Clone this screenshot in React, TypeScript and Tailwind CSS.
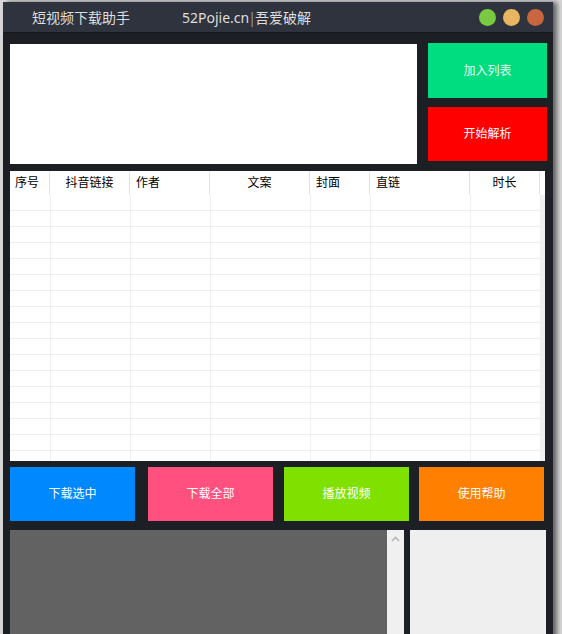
import React from "react";

const cols = [
  { name: "序号", w: "w-[40px]", align: "justify-start pl-[5px]" },
  { name: "抖音链接", w: "w-[80px]", align: "justify-center" },
  { name: "作者", w: "w-[80px]", align: "justify-start pl-[6px]" },
  { name: "文案", w: "w-[100px]", align: "justify-center" },
  { name: "封面", w: "w-[60px]", align: "justify-start pl-[6px]" },
  { name: "直链", w: "w-[100px]", align: "justify-start pl-[6px]" },
  { name: "时长", w: "w-[70px]", align: "justify-center" },
];

const rows = Array.from({ length: 17 }, (_, i) => i);

const actions = [
  { label: "下载选中", cls: "bg-[#0088ff]" },
  { label: "下载全部", cls: "bg-[#ff5080] ml-[13px]" },
  { label: "播放视频", cls: "bg-[#80e000] ml-[11px]" },
  { label: "使用帮助", cls: "bg-[#ff8000] ml-[10px]" },
];

export default function App() {
  return (
    <div
      className="w-[562px] h-[634px] overflow-hidden bg-[#d8d8d8] pt-[2px] pl-[3px] text-[12px]"
      style={{ fontFamily: '"Noto Sans", "Noto Sans CJK SC", sans-serif' }}
    >
      <div className="w-[550px] h-[640px] bg-[#1c1f23] flex flex-col shadow-[4px_0_5px_rgba(0,0,0,0.55)]">
        {/* title bar */}
        <div className="h-[31px] bg-[#2f333d] flex items-center text-[#dedede] text-[14px] border-b border-[#15171a]">
          <span className="ml-[29px]">短视频下载助手</span>
          <span className="ml-[52px]">
            52Pojie.cn<span className="text-[#9a9a9a] -mx-[1px]">|</span>吾爱破解
          </span>
          <div className="ml-auto mr-[9px] flex items-center gap-[7px]">
            <span className="w-[17px] h-[17px] rounded-full bg-[#7ac943]" />
            <span className="w-[17px] h-[17px] rounded-full bg-[#e8b660]" />
            <span className="w-[17px] h-[17px] rounded-full bg-[#c8663f]" />
          </div>
        </div>

        <div className="pl-[7px] pr-[6px] pt-[10px] flex flex-col">
          {/* input + top buttons */}
          <div className="flex gap-[11px]">
            <div className="w-[407px] h-[120px] mt-[1px] bg-white" />
            <div className="flex flex-col gap-[9px]">
              <button className="w-[119px] h-[55px] bg-[#00dc80] text-[#e8f8ef]">加入列表</button>
              <button className="w-[119px] h-[54px] bg-[#ff0000] text-white">开始解析</button>
            </div>
          </div>

          {/* table */}
          <div className="mt-[7px] w-[535px] h-[290px] bg-white flex overflow-hidden">
            <div className="w-[531px] flex flex-col">
              <div className="h-[24px] flex shrink-0 text-black">
                {cols.map((c) => (
                  <div key={c.name} className={`${c.w} h-full flex items-center border-r border-[#e3e3e3] ${c.align}`}>
                    {c.name}
                  </div>
                ))}
              </div>
              {rows.map((r) => (
                <div key={r} className="h-[16px] flex shrink-0 border-b border-[#efefef]">
                  <div className="w-[1px]" />
                  {cols.map((c) => (
                    <div key={c.name} className={`${c.w} h-full border-r border-[#efefef]`} />
                  ))}
                </div>
              ))}
            </div>
            <div className="flex-1 flex flex-col">
              <div className="h-[24px] bg-white" />
              <div className="flex-1 bg-[#f0f0f0]" />
            </div>
          </div>

          {/* action buttons */}
          <div className="mt-[6px] flex">
            {actions.map((a) => (
              <button key={a.label} className={`w-[125px] h-[54px] ${a.cls} text-white`}>
                {a.label}
              </button>
            ))}
          </div>

          {/* log area */}
          <div className="mt-[9px] flex">
            <div className="w-[377px] h-[110px] bg-[#626262]" />
            <div className="w-[17px] h-[110px] bg-[#f0f0f0] flex justify-center pt-[6px]">
              <svg width="9" height="6" viewBox="0 0 9 6">
                <path d="M1 5 L4.5 1.5 L8 5" stroke="#b8b8b8" strokeWidth="1.6" fill="none" />
              </svg>
            </div>
            <div className="ml-[6px] w-[136px] h-[110px] bg-[#efefef]" />
          </div>
        </div>
      </div>
    </div>
  );
}
